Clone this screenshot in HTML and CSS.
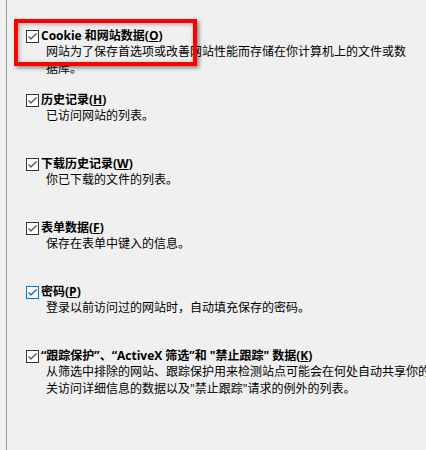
FILE: index.html
```html
<!DOCTYPE html>
<html lang="zh-CN">
<head>
  <meta charset="UTF-8" />
  <title>删除浏览历史记录</title>
  <meta name="viewport" content="width=device-width, initial-scale=1.0" />
  <link rel="stylesheet" href="styles.css">
</head>
<body>

  <div class="frame">
    <div class="panel">

      <div class="item">
        <label class="item-title">
          <span class="check"><svg viewBox="0 0 13 13" width="13" height="13"><rect x="0.5" y="0.5" width="12" height="12" /><polyline points="2.5,6.5 5,9 10.5,3.5" /></svg></span>
          <span>Cookie 和网站数据(<u>O</u>)</span>
        </label>
        <div class="item-desc">网站为了保存首选项或改善网站性能而存储在你计算机上的文件或数<br>据库。</div>
      </div>

      <div class="item">
        <label class="item-title">
          <span class="check"><svg viewBox="0 0 13 13" width="13" height="13"><rect x="0.5" y="0.5" width="12" height="12" /><polyline points="2.5,6.5 5,9 10.5,3.5" /></svg></span>
          <span>历史记录(<u>H</u>)</span>
        </label>
        <div class="item-desc">已访问网站的列表。</div>
      </div>

      <div class="item">
        <label class="item-title">
          <span class="check"><svg viewBox="0 0 13 13" width="13" height="13"><rect x="0.5" y="0.5" width="12" height="12" /><polyline points="2.5,6.5 5,9 10.5,3.5" /></svg></span>
          <span>下载历史记录(<u>W</u>)</span>
        </label>
        <div class="item-desc">你已下载的文件的列表。</div>
      </div>

      <div class="item">
        <label class="item-title">
          <span class="check"><svg viewBox="0 0 13 13" width="13" height="13"><rect x="0.5" y="0.5" width="12" height="12" /><polyline points="2.5,6.5 5,9 10.5,3.5" /></svg></span>
          <span>表单数据(<u>F</u>)</span>
        </label>
        <div class="item-desc">保存在表单中键入的信息。</div>
      </div>

      <div class="item">
        <label class="item-title">
          <span class="check hover"><svg viewBox="0 0 13 13" width="13" height="13"><rect x="0.5" y="0.5" width="12" height="12" /><polyline points="2.5,6.5 5,9 10.5,3.5" /></svg></span>
          <span>密码(<u>P</u>)</span>
        </label>
        <div class="item-desc">登录以前访问过的网站时，自动填充保存的密码。</div>
      </div>

      <div class="item">
        <label class="item-title">
          <span class="check"><svg viewBox="0 0 13 13" width="13" height="13"><rect x="0.5" y="0.5" width="12" height="12" /><polyline points="2.5,6.5 5,9 10.5,3.5" /></svg></span>
          <span>“跟踪保护”、“ActiveX 筛选”和 "禁止跟踪" 数据(<u>K</u>)</span>
        </label>
        <div class="item-desc wide">从筛选中排除的网站、跟踪保护用来检测站点可能会在何处自动共享你的相<br>关访问详细信息的数据以及"禁止跟踪"请求的例外的列表。</div>
      </div>

    </div>
  </div>

  <!-- annotation box over the first option -->
  <div class="highlight"></div>

</body>
</html>
```

FILE: styles.css
```css
:root {
  --bg: #f0f0f0;
  --text: #000;
  --edge-dark: #9a9a9a;
  --edge-light: #fbfbfb;
  --mark: #3c3c3c;
  --hover: #0078d7;
  --font: "Open Sans", "Noto Sans CJK SC", sans-serif;
}

* {
  margin: 0;
  padding: 0;
  box-sizing: border-box;
}

html, body {
  height: 100%;
  overflow: hidden;
  background-color: var(--bg);
  color: var(--text);
  font-family: var(--font);
  font-size: 12px;
}

.frame {
  height: 100%;
  margin-left: 2px;
  padding-left: 3px;
  border-left: 1px solid var(--edge-light);
}

.panel {
  height: 100%;
  padding-top: 28px;
  padding-left: 19px;
  border-left: 1px solid var(--edge-dark);
}

.item {
  height: 64px;
}

.item-title {
  display: flex;
  align-items: center;
  gap: 2px;
  height: 16px;
  line-height: 16px;
  font-weight: bold;
  white-space: nowrap;
}

.item-title u {
  text-underline-offset: 1px;
}

.check {
  display: flex;
  width: 13px;
  height: 13px;
}

.check rect {
  fill: #fff;
  stroke: #333;
  stroke-width: 1;
}

.check polyline {
  fill: none;
  stroke: var(--mark);
  stroke-width: 1.1;
}

.check.hover rect {
  stroke: var(--hover);
  fill: #f4f9fd;
}

.check.hover polyline {
  stroke: #1c4e7a;
}

.item-desc {
  padding-left: 20px;
  line-height: 16.5px;
  white-space: nowrap;
}

.highlight {
  position: absolute;
  left: 14px;
  top: 19px;
  width: 183px;
  height: 47px;
  border: 4px solid #f00;
  box-shadow: 2px 2px 4px rgba(0, 0, 0, 0.45), inset 1px 1px 4px rgba(0, 0, 0, 0.35);
  pointer-events: none;
}
```
